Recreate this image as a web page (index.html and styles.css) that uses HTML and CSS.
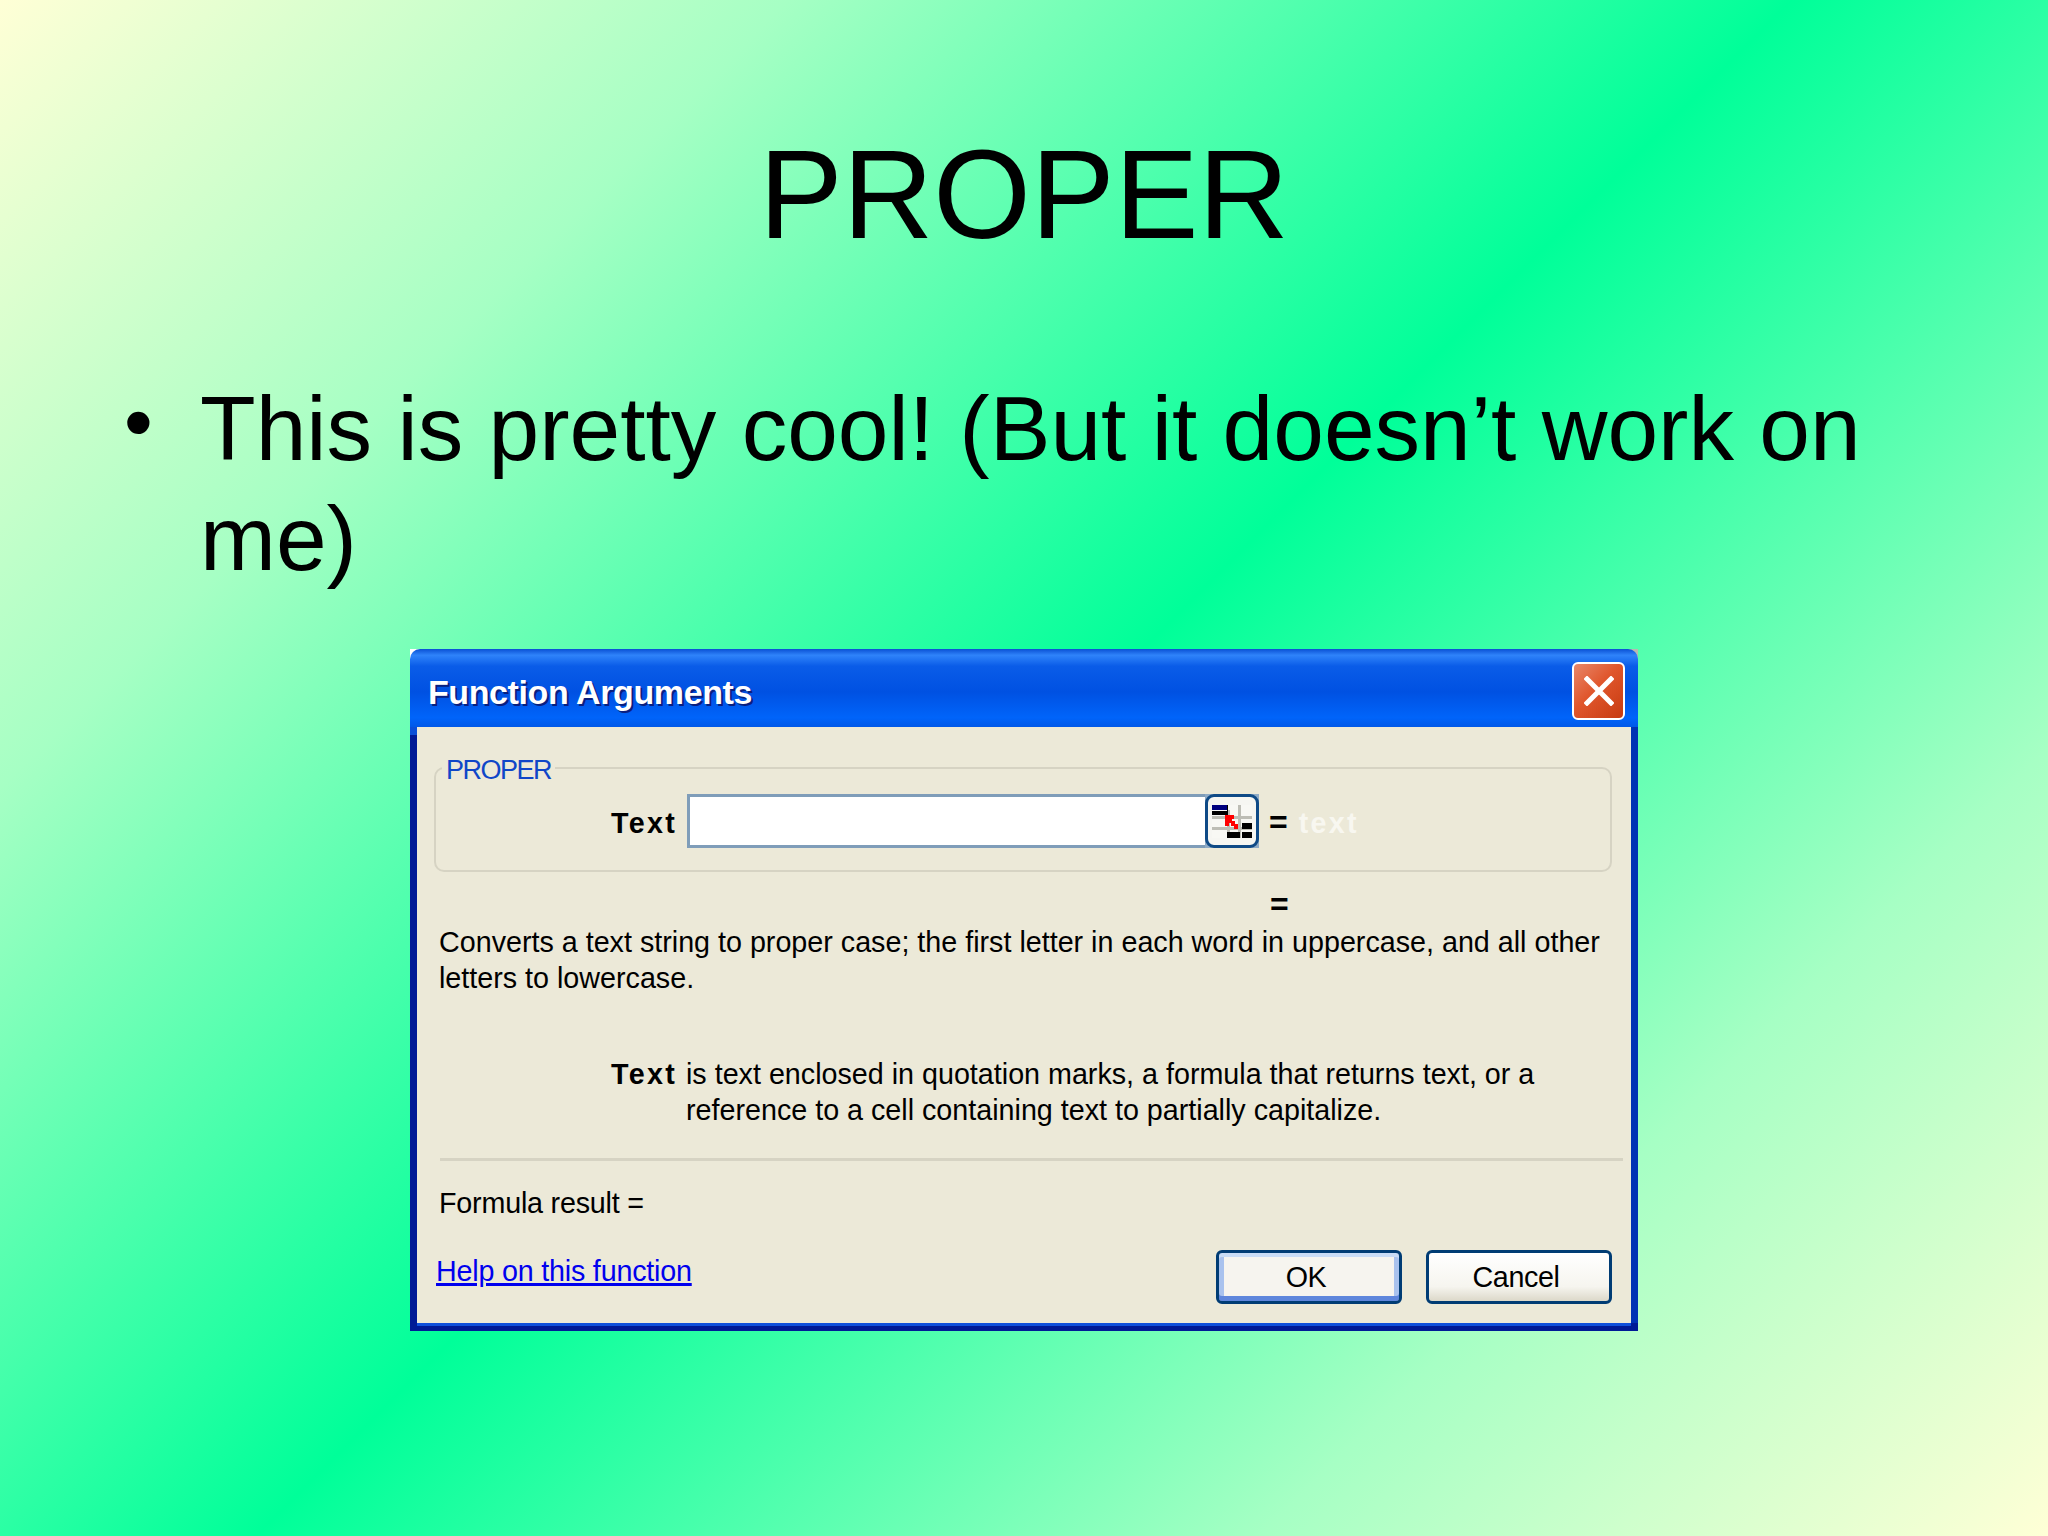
FILE: index.html
```html
<!DOCTYPE html>
<html lang="en">
<head>
    <meta charset="UTF-8">
    <title>PROPER</title>
    <link rel="stylesheet" href="styles.css">
</head>
<body>

    <!-- Slide heading -->
    <h1 class="slide-title">PROPER</h1>

    <!-- Bullet -->
    <div class="bullet-row">
        <span class="bullet">•</span>
        <p class="bullet-text">This is pretty cool! (But it doesn’t work on me)</p>
    </div>

    <!-- Function Arguments dialog -->
    <div class="dialog">
        <div class="titlebar">
            <span class="titlebar-text">Function Arguments</span>
            <div class="close-btn">
                <svg viewBox="0 0 30 30" width="30" height="30">
                    <path d="M3 3 L27 27 M27 3 L3 27" stroke="#fff" stroke-width="5" stroke-linecap="square" fill="none"/>
                </svg>
            </div>
        </div>

        <div class="dialog-body">
            <fieldset class="group">
                <legend class="group-name">PROPER</legend>
                <div class="arg-row">
                    <span class="arg-label">Text</span>
                    <div class="arg-input">
                        <div class="ref-cell">
                            <div class="ref-btn">
                                <svg viewBox="0 0 40 33" width="40" height="33" shape-rendering="crispEdges">
                                    <rect width="40" height="33" fill="#f8f8f4"/>
                                    <path d="M15 5h3v28h-3zM26 0h3v33h-3zM0 11h40v3H0zM0 22h40v3H0z" fill="#bdbdb5"/>
                                    <rect x="0" y="0" width="15" height="5" fill="#00007f"/>
                                    <rect x="0" y="6" width="15" height="4" fill="#000"/>
                                    <rect x="15" y="0" width="1" height="10" fill="#000"/>
                                    <rect x="30" y="18" width="10" height="6" fill="#000"/>
                                    <rect x="15" y="27" width="13" height="6" fill="#000"/>
                                    <rect x="30" y="27" width="10" height="6" fill="#000"/>
                                    <path d="M13 10h9v4h-2v2h3v3h3v5h-4v-3h-3v-3h-2v3h-4z" fill="#f00"/>
                                </svg>
                            </div>
                        </div>
                    </div>
                    <span class="arg-equals">=</span>
                    <span class="arg-hint">text</span>
                </div>
            </fieldset>

            <div class="result-equals">=</div>

            <p class="description">Converts a text string to proper case; the first letter in each word in uppercase, and all other letters to lowercase.</p>

            <div class="arg-help">
                <span class="arg-help-name">Text</span>
                <p class="arg-help-text">is text enclosed in quotation marks, a formula that returns text, or a reference to a cell containing text to partially capitalize.</p>
            </div>

            <div class="divider"></div>

            <div class="formula-result">Formula result =</div>

            <div class="dialog-footer">
                <a class="help-link" href="#">Help on this function</a>
                <div class="buttons">
                    <button class="btn btn-default">OK</button>
                    <button class="btn">Cancel</button>
                </div>
            </div>
        </div>
    </div>

</body>
</html>
```

FILE: styles.css
```css
/* === Slide === */
html, body {
    margin: 0;
    height: 100%;
}

body {
    width: 2048px;
    height: 1536px;
    overflow: hidden;
    padding-top: 123px;
    box-sizing: border-box;
    font-family: "Liberation Sans", Arial, sans-serif;
    color: #000;
    background: linear-gradient(135deg, #ffffd6 0%, #a6ffc4 22%, #00ff99 50%, #a6ffc4 78%, #ffffd6 100%);
}

.slide-title {
    margin: 0;
    font-size: 125.5px;
    line-height: 144px;
    font-weight: normal;
    text-align: center;
}

/* === Bullet === */
.bullet-row {
    display: flex;
    margin-top: 107px;
    padding: 0 160px 0 124px;
    font-size: 91.1px;
    line-height: 110px;
}

.bullet {
    width: 76px;
    flex: none;
    font-size: 82px;
    line-height: 95px;
}

.bullet-text {
    margin: 0;
}

/* === Dialog frame === */
.dialog {
    width: 1228px;
    height: 682px;
    margin: 55px auto 0;
    box-sizing: border-box;
    display: flex;
    flex-direction: column;
    background: linear-gradient(90deg, #ffffff 50%, #b9b9b0 50%) top / 100% 12px no-repeat, #0a4fd8;
    font-family: "Liberation Sans", Arial, sans-serif;
    font-size: 28.7px;
    line-height: 36px;
}

.titlebar {
    height: 78px;
    flex: none;
    display: flex;
    align-items: center;
    justify-content: space-between;
    padding: 0 13px 0 18px;
    box-sizing: border-box;
    border-radius: 10px 10px 0 0;
    background: linear-gradient(180deg, #0a50d4 0%, #2f83fa 8%, #0a5ce8 22%, #0051e2 55%, #0064fa 88%, #0058e8 100%);
}

.titlebar-text {
    color: #fff;
    font-weight: bold;
    font-size: 34px;
    letter-spacing: -0.4px;
    margin-top: 8px;
    text-shadow: 2px 2px 0 #0a1f80;
}

.close-btn {
    width: 53px;
    height: 58px;
    margin-top: 6px;
    box-sizing: border-box;
    display: flex;
    align-items: center;
    justify-content: center;
    border: 2px solid #fff;
    border-radius: 6px;
    background: linear-gradient(135deg, #e8876a 0%, #e0562c 45%, #c73a10 100%);
}

.dialog-body {
    flex: 1;
    margin: 0 7px 8px 7px;
    padding-top: 21px;
    background: #ece9d8;
    box-shadow: 0 3px 0 #0f50dc, 7px 0 0 #0032b4, 7px 8px 0 #001a96, -7px 8px 0 #001a96;
}

/* === Argument group === */
.group {
    margin: 0 19px 0 17px;
    padding: 0;
    height: 124px;
    box-sizing: border-box;
    border: 2px solid #d6d3c3;
    border-radius: 10px;
}

.group-name {
    margin-left: 6px;
    padding: 4px 4px 0;
    color: #1046c8;
    font-size: 27px;
    letter-spacing: -1.5px;
}

.arg-row {
    display: flex;
    align-items: center;
    margin-top: 6px;
    margin-left: 175px;
}

.arg-label,
.arg-help-name {
    font-weight: bold;
    letter-spacing: 2.3px;
}

.arg-label {
    width: 76px;
    padding-top: 4px;
}

.arg-input {
    width: 572px;
    height: 54px;
    box-sizing: border-box;
    display: flex;
    justify-content: flex-end;
    border: 3px solid #7f9db9;
    background: #fff;
}

.ref-cell {
    width: 54px;
    height: 54px;
    flex: none;
    margin: -3px -3px 0 0;
    background: #8fabc6;
}

.ref-btn {
    height: 100%;
    box-sizing: border-box;
    display: flex;
    align-items: center;
    justify-content: center;
    border: 3px solid #0f4a86;
    border-radius: 9px;
    background: #f6f6f2;
}

.arg-equals {
    margin-left: 10px;
    padding-top: 2px;
    font-weight: bold;
    font-size: 32px;
}

.arg-hint {
    margin-left: 11px;
    padding-top: 4px;
    color: #f8f7f0;
    font-weight: bold;
    letter-spacing: 2.3px;
}

/* === Text blocks === */
.result-equals {
    margin: 14px 0 0 853px;
    font-weight: bold;
    font-size: 32px;
}

.description {
    width: 1180px;
    margin: 2px 0 0 22px;
}

.arg-help {
    display: flex;
    margin: 60px 0 0 194px;
}

.arg-help-name {
    width: 75px;
    flex: none;
}

.arg-help-text {
    width: 900px;
    margin: 0;
}

.divider {
    height: 3px;
    margin: 30px 8px 0 23px;
    background: #d6d3c3;
}

.formula-result {
    margin: 24px 0 0 22px;
    letter-spacing: -0.2px;
}

/* === Footer === */
.dialog-footer {
    display: flex;
    justify-content: space-between;
    margin: 29px 19px 0 19px;
}

.help-link {
    margin-top: 3px;
    color: #0000ee;
    letter-spacing: -0.2px;
    text-decoration-thickness: 3px;
    align-self: flex-start;
}

.buttons {
    display: flex;
    gap: 24px;
}

.btn {
    width: 186px;
    height: 54px;
    box-sizing: border-box;
    padding: 0 6px 0 0;
    font-family: inherit;
    font-size: 28.7px;
    letter-spacing: -0.4px;
    color: #000;
    border: 3px solid #003c74;
    border-radius: 6px;
    background: linear-gradient(180deg, #ffffff 0%, #f6f5ef 70%, #dcd8c9 100%);
}

.btn-default {
    box-shadow: inset 0 4px 0 #c9dcf6, inset 0 -5px 0 #5f86dc, inset 5px 0 0 #a9c2ee, inset -5px 0 0 #a9c2ee;
    background: #f6f4ef;
}
```
